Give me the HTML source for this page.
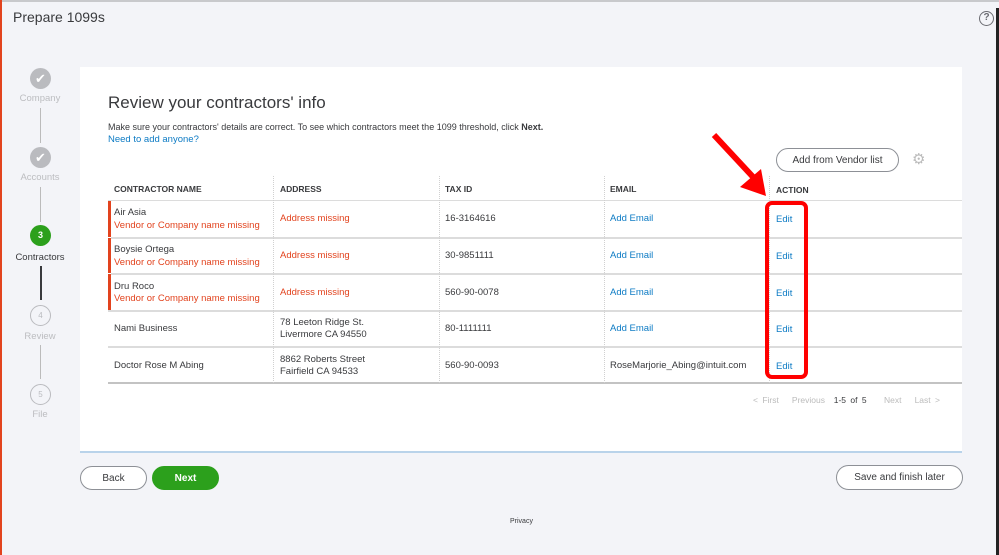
<!DOCTYPE html>
<html><head><meta charset="utf-8"><style>
*{margin:0;padding:0;box-sizing:border-box}
body{width:999px;height:555px;background:#f3f4f8;position:relative;overflow:hidden;font-family:"Liberation Sans",sans-serif;color:#393a3d}
.a{position:absolute;white-space:nowrap}
.circ{position:absolute;width:21px;height:21px;border-radius:50%;left:30px}
.lbl{position:absolute;width:80px;left:0;text-align:center;font-size:9.5px;color:#bcbdc0}
.vl{position:absolute;left:40px;width:1px;background:#bbb}
.t{font-size:9.5px}
.red{color:#e2431e}
.blue{color:#0d7bc4}
.hd{font-size:8.5px;font-weight:bold;color:#393a3d}
.btn{position:absolute;border:1px solid #8d9096;border-radius:13px;background:#fff;font-size:10px;color:#393a3d;display:flex;align-items:center;justify-content:center}
</style></head><body>
<div class="a" style="left:0;top:0;width:999px;height:2px;background:#c8c9cc"></div>
<div class="a" style="left:0;top:0;width:2px;height:555px;background:#e2431e"></div>
<div class="a" style="left:996px;top:8px;width:3px;height:547px;background:#222"></div>
<div class="a" style="left:13px;top:9px;font-size:14px;color:#393a3d">Prepare 1099s</div>
<div class="a" style="left:979px;top:11px;width:15px;height:15px;border:1.5px solid #6b6c72;border-radius:50%;font-size:10px;text-align:center;line-height:12px;color:#6b6c72;font-weight:bold">?</div>

<!-- stepper -->
<div class="circ" style="top:68px;background:#babbbf;color:#fff;text-align:center;font-size:13px;line-height:21px">✔</div>
<div class="lbl" style="top:93px">Company</div>
<div class="vl" style="top:108px;height:35px"></div>
<div class="circ" style="top:147px;background:#babbbf;color:#fff;text-align:center;font-size:13px;line-height:21px">✔</div>
<div class="lbl" style="top:172px">Accounts</div>
<div class="vl" style="top:187px;height:35px"></div>
<div class="circ" style="top:225px;background:#2ca01c;color:#fff;text-align:center;font-size:9px;font-weight:bold;line-height:21px">3</div>
<div class="lbl" style="top:252px;color:#393a3d">Contractors</div>
<div class="vl" style="top:266px;height:34px;background:#393a3d;width:2px"></div>
<div class="circ" style="top:305px;border:1px solid #babbbf;color:#babbbf;text-align:center;font-size:8px;line-height:19px">4</div>
<div class="lbl" style="top:331px">Review</div>
<div class="vl" style="top:345px;height:34px"></div>
<div class="circ" style="top:384px;border:1px solid #babbbf;color:#babbbf;text-align:center;font-size:8px;line-height:19px">5</div>
<div class="lbl" style="top:409px">File</div>

<!-- card -->
<div class="a" style="left:80px;top:67px;width:882px;height:386px;background:#fff;border-bottom:2px solid #b9d3ea"></div>
<div class="a" style="left:108px;top:93px;font-size:17px;color:#393a3d">Review your contractors' info</div>
<div class="a t" style="left:108px;top:122px;font-size:9px;color:#393a3d">Make sure your contractors' details are correct. To see which contractors meet the 1099 threshold, click <b>Next.</b></div>
<div class="a t blue" style="left:108px;top:134px">Need to add anyone?</div>
<div class="btn" style="left:776px;top:148px;width:123px;height:24px">Add from Vendor list</div>
<div class="a" style="left:912px;top:150px;font-size:15px;color:#bbb">⚙</div>

<!-- table -->
<div class="a" style="left:108px;top:200px;width:854px;height:1px;background:#dcdcdc"></div>
<div class="a" style="left:108px;top:237px;width:854px;height:2px;background:#dcdcdc"></div>
<div class="a" style="left:108px;top:273px;width:854px;height:2px;background:#dcdcdc"></div>
<div class="a" style="left:108px;top:310px;width:854px;height:2px;background:#dcdcdc"></div>
<div class="a" style="left:108px;top:346px;width:854px;height:2px;background:#dcdcdc"></div>
<div class="a" style="left:108px;top:382px;width:854px;height:2px;background:#c3c3c3"></div>
<div class="a" style="left:273px;top:176px;width:1px;height:207px;border-left:1px dotted #d0d0d0"></div>
<div class="a" style="left:439px;top:176px;width:1px;height:207px;border-left:1px dotted #d0d0d0"></div>
<div class="a" style="left:604px;top:176px;width:1px;height:207px;border-left:1px dotted #d0d0d0"></div>
<div class="a" style="left:769px;top:176px;width:1px;height:207px;border-left:1px dotted #d0d0d0"></div>
<div class="a" style="left:108px;top:201px;width:3px;height:109px;background:#e2431e"></div>
<div class="a" style="left:108px;top:237px;width:3px;height:1px;background:#fff"></div>
<div class="a" style="left:108px;top:273px;width:3px;height:1px;background:#fff"></div>

<div class="a hd" style="left:114px;top:184px">CONTRACTOR NAME</div>
<div class="a hd" style="left:280px;top:184px">ADDRESS</div>
<div class="a hd" style="left:445px;top:184px">TAX ID</div>
<div class="a hd" style="left:610px;top:184px">EMAIL</div>
<div class="a hd" style="left:776px;top:185px">ACTION</div>

<div class="a t" style="left:114px;top:207px">Air Asia</div>
<div class="a t red" style="left:114px;top:220px">Vendor or Company name missing</div>
<div class="a t red" style="left:280px;top:213px">Address missing</div>
<div class="a t" style="left:445px;top:213px">16-3164616</div>
<div class="a t blue" style="left:610px;top:213px">Add Email</div>
<div class="a t blue" style="left:776px;top:214px">Edit</div>

<div class="a t" style="left:114px;top:244px">Boysie Ortega</div>
<div class="a t red" style="left:114px;top:257px">Vendor or Company name missing</div>
<div class="a t red" style="left:280px;top:250px">Address missing</div>
<div class="a t" style="left:445px;top:250px">30-9851111</div>
<div class="a t blue" style="left:610px;top:250px">Add Email</div>
<div class="a t blue" style="left:776px;top:251px">Edit</div>

<div class="a t" style="left:114px;top:281px">Dru Roco</div>
<div class="a t red" style="left:114px;top:293px">Vendor or Company name missing</div>
<div class="a t red" style="left:280px;top:287px">Address missing</div>
<div class="a t" style="left:445px;top:287px">560-90-0078</div>
<div class="a t blue" style="left:610px;top:287px">Add Email</div>
<div class="a t blue" style="left:776px;top:288px">Edit</div>

<div class="a t" style="left:114px;top:323px">Nami Business</div>
<div class="a t" style="left:280px;top:317px">78 Leeton Ridge St.</div>
<div class="a t" style="left:280px;top:329px">Livermore CA 94550</div>
<div class="a t" style="left:445px;top:323px">80-1111111</div>
<div class="a t blue" style="left:610px;top:323px">Add Email</div>
<div class="a t blue" style="left:776px;top:324px">Edit</div>

<div class="a t" style="left:114px;top:360px">Doctor Rose M Abing</div>
<div class="a t" style="left:280px;top:354px">8862 Roberts Street</div>
<div class="a t" style="left:280px;top:366px">Fairfield CA 94533</div>
<div class="a t" style="left:445px;top:360px">560-90-0093</div>
<div class="a t" style="left:610px;top:360px">RoseMarjorie_Abing@intuit.com</div>
<div class="a t blue" style="left:776px;top:361px">Edit</div>

<div class="a" style="left:753px;top:395px;font-size:8.5px;color:#bbb;word-spacing:2px">&lt; First &nbsp; Previous &nbsp;<span style="color:#393a3d">1-5 of 5</span>&nbsp;&nbsp;&nbsp; Next &nbsp; Last &gt;</div>

<!-- annotation -->
<div class="a" style="left:765px;top:201px;width:43px;height:178px;border:4px solid #f00;border-radius:7px"></div>
<svg class="a" style="left:0;top:0" width="999" height="555"><line x1="714" y1="135" x2="754" y2="178" stroke="#f00" stroke-width="6"/><polygon points="740,187 766,196 761,169" fill="#f00"/></svg>

<!-- footer buttons -->
<div class="btn" style="left:80px;top:466px;width:67px;height:24px">Back</div>
<div class="btn" style="left:152px;top:466px;width:67px;height:24px;background:#2ca01c;border-color:#2ca01c;color:#fff;font-weight:bold">Next</div>
<div class="btn" style="left:836px;top:465px;width:127px;height:25px">Save and finish later</div>
<div class="a" style="left:510px;top:518px;font-size:7px;color:#393a3d">Privacy</div>
</body></html>
